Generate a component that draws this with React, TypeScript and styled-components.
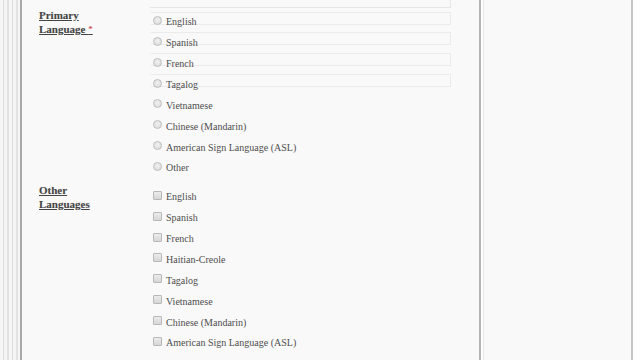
import styled, {createGlobalStyle, css} from 'styled-components';

const GlobalStyle = createGlobalStyle`
  html, body {
    margin: 0;
    padding: 0;
    background: #ffffff;
    overflow: hidden;
  }`

const Page = styled.div`
  width: 640px;
  height: 360px;
  display: flex;
  flex-direction: row;
  background: #ffffff;
  font-family: "Liberation Serif", "Times New Roman", serif;`

const Gutter = styled.div`
  width: 20px;
  height: 100%;
  flex-shrink: 0;
  background: repeating-linear-gradient(90deg,
    #f6f6f6 0px, #f6f6f6 3px, #dedede 3px, #dedede 4px,
    #f4f4f4 4px, #f4f4f4 7px, #e2e2e2 7px, #e2e2e2 9px);
  border-right: 2px solid #a9a9a9;`

const Main = styled.div`
  width: 459px;
  height: 100%;
  flex-shrink: 0;
  background: #f9f9f9;
  padding-left: 17px;
  box-sizing: border-box;
  display: flex;
  flex-direction: column;
  border-right: 2px solid #b4b4b4;`

const Divider = styled.div`
  width: 1px;
  margin-left: 2px;
  height: 100%;
  background: #e6e6e6;`

const Side = styled.div`
  width: 147px;
  height: 100%;
  background: #f9f9f9;
  border-right: 2px solid #c6c6c6;`

const PrevField = styled.div`
  height: 8px;
  margin-left: 111px;
  width: 301px;
  box-sizing: border-box;
  border-right: 1px solid #e6e6e6;
  border-bottom: 1px solid #e6e6e6;`

const Section = styled.div<{gap?: number}>`
  display: grid;
  grid-template-columns: 111px 1fr;
  margin-top: ${(p) => p.gap || 0}px;`

const Label = styled.div`
  width: 72px;
  font-size: 11px;
  font-weight: bold;
  line-height: 14px;
  color: #454545;
  text-decoration: underline;
  text-underline-offset: 1px;
  text-shadow: 0 0 1px rgba(0,0,0,0.15);`

const Required = styled.span`
  color: #d23a3a;
  font-weight: normal;
  font-size: 9px;
  vertical-align: top;`

const Options = styled.div`
  padding-top: 3.5px;
  display: flex;
  flex-direction: column;`

const Option = styled.div<{ghost?: boolean}>`
  position: relative;
  height: 20.86px;
  display: flex;
  align-items: center;
  gap: 4px;
  padding-left: 3px;
  font-size: 10px;
  color: #4e4e4e;
  ${(p) => p.ghost && css`
    &::before {
      content: "";
      position: absolute;
      left: 0;
      top: 0;
      width: 301px;
      height: 13px;
      box-sizing: border-box;
      border: 1px solid #ebebeb;
      border-left-color: transparent;
      pointer-events: none;
    }`}`

const Radio = styled.span`
  position: relative;
  width: 9px;
  height: 9px;
  box-sizing: border-box;
  border-radius: 50%;
  border: 1px solid #bdbdbd;
  background: radial-gradient(circle at 50% 40%, #f0f0f0 0%, #d9d9d9 100%);
  margin-top: -3px;
  flex-shrink: 0;`

const Check = styled.span`
  position: relative;
  width: 9px;
  height: 9px;
  box-sizing: border-box;
  border-radius: 1px;
  border: 1px solid #b8b8b8;
  background: linear-gradient(#ececec, #d6d6d6);
  margin-top: -3px;
  flex-shrink: 0;`

const Text = styled.span`
  position: relative;
  line-height: 12px;
  margin-top: 1px;`

const primary = ["English", "Spanish", "French", "Tagalog", "Vietnamese",
  "Chinese (Mandarin)", "American Sign Language (ASL)", "Other"]

const other = ["English", "Spanish", "French", "Haitian-Creole", "Tagalog",
  "Vietnamese", "Chinese (Mandarin)", "American Sign Language (ASL)"]

const App = () => {
  return (
    <Page>
      <GlobalStyle/>
      <Gutter/>
      <Main>
        <PrevField/>
        <Section>
          <Label>Primary Language <Required>*</Required></Label>
          <Options>
            {primary.map((lang, i) => (
              <Option key={lang} ghost={i < 4}>
                <Radio/>
                <Text>{lang}</Text>
              </Option>
            ))}
          </Options>
        </Section>
        <Section gap={4.6}>
          <Label>Other Languages</Label>
          <Options>
            {other.map((lang) => (
              <Option key={lang}>
                <Check/>
                <Text>{lang}</Text>
              </Option>
            ))}
          </Options>
        </Section>
      </Main>
      <Divider/>
      <Side/>
    </Page>
  );
}

export default App
